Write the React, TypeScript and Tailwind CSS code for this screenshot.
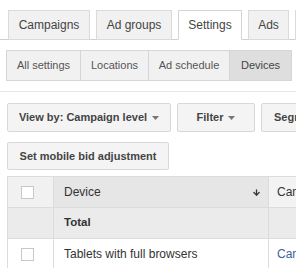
import { ArrowDown } from 'lucide-react';

const tabs = [
  { label: 'Campaigns', w: 'w-[82px]', active: false },
  { label: 'Ad groups', w: 'w-[76px]', active: false },
  { label: 'Settings', w: 'w-[64px]', active: true },
  { label: 'Ads', w: 'w-[41px]', active: false },
  { label: '', w: 'w-[72px]', active: false },
];

const subTabs = [
  { label: 'All settings', w: 'w-[75px]', active: false },
  { label: 'Locations', w: 'w-[69px]', active: false },
  { label: 'Ad schedule', w: 'w-[82px]', active: false },
  { label: 'Devices', w: 'w-[63px]', active: true },
];

function Caret() {
  return (
    <svg width="7" height="4" viewBox="0 0 7 4" className="shrink-0">
      <path d="M0 0h7L3.5 4z" fill="#777" />
    </svg>
  );
}

function Checkbox() {
  return <div className="w-[13px] h-[13px] bg-white border border-[#c8c8c8]" />;
}

export default function App() {
  return (
    <div className="w-[296px] h-[268px] overflow-hidden bg-white font-['Liberation_Sans',Arial,sans-serif] whitespace-nowrap">
      {/* main tabs */}
      <div className="flex gap-[6px] pl-[8px] pt-[10px] border-b border-[#d0d0d0]">
        {tabs.map((t, i) => (
          <div
            key={i}
            className={`${t.w} shrink-0 h-[30px] -mb-px flex items-center justify-center border text-[12px] text-[#444] ${
              t.active ? 'bg-white border-[#d4d4d4] border-b-white' : 'bg-[#f1f1f1] border-[#dadada]'
            }`}
          >
            {t.label}
          </div>
        ))}
      </div>

      {/* sub tabs */}
      <div className="flex ml-[6px] mt-[10px]">
        {subTabs.map((t, i) => (
          <div
            key={t.label}
            className={`${t.w} shrink-0 h-[31px] flex items-center justify-center border border-[#d6d6d6] text-[11px] ${
              i > 0 ? '-ml-px' : ''
            } ${t.active ? 'bg-[#dedede] text-[#444]' : 'bg-[#f1f1f1] text-[#555]'}`}
          >
            {t.label}
          </div>
        ))}
      </div>

      <div className="mt-[10px] h-px bg-[#e6e6e6]" />

      {/* toolbar */}
      <div className="flex gap-[6px] pl-[7px] mt-[11px]">
        <button className="w-[164px] shrink-0 h-[29px] flex items-center justify-center gap-[5px] bg-[#f4f4f4] border border-[#d8d8d8] rounded-[2px] text-[11px] font-bold text-[#444]">
          View by: Campaign level <Caret />
        </button>
        <button className="w-[78px] shrink-0 h-[29px] flex items-center justify-center gap-[5px] bg-[#f4f4f4] border border-[#d8d8d8] rounded-[2px] text-[11px] font-bold text-[#444]">
          Filter <Caret />
        </button>
        <button className="w-[100px] shrink-0 h-[29px] flex items-center pl-[12px] gap-[5px] bg-[#f4f4f4] border border-[#d8d8d8] rounded-[2px] text-[11px] font-bold text-[#444]">
          Segment <Caret />
        </button>
      </div>

      <div className="pl-[7px] mt-[10px]">
        <button className="w-[162px] h-[28px] flex items-center justify-center bg-[#f4f4f4] border border-[#d8d8d8] rounded-[2px] text-[11px] font-bold text-[#444]">
          Set mobile bid adjustment
        </button>
      </div>

      {/* table */}
      <div className="ml-[7px] mt-[6px] border-l border-t border-[#dcdcdc] text-[12px] text-[#333]">
        <div className="flex h-[31px] border-b border-[#dcdcdc]">
          <div className="w-[46px] shrink-0 pl-[13px] flex items-center bg-[#f1f1f1] border-r border-[#dcdcdc]">
            <Checkbox />
          </div>
          <div className="w-[215px] shrink-0 pl-[10px] pr-[7px] flex items-center justify-between bg-[#e6e6e6] border-r border-[#dcdcdc]">
            <span>Device</span>
            <ArrowDown size={9} strokeWidth={3.5} color="#333" />
          </div>
          <div className="w-[120px] shrink-0 pl-[8px] flex items-center bg-[#f3f3f3]">Campaign</div>
        </div>

        <div className="flex h-[31px] border-b border-[#dcdcdc] bg-[#ebebeb]">
          <div className="w-[46px] shrink-0 border-r border-[#dcdcdc]" />
          <div className="w-[215px] shrink-0 pl-[10px] flex items-center border-r border-[#dcdcdc] font-bold text-[11.5px]">
            Total
          </div>
          <div className="w-[120px] shrink-0" />
        </div>

        <div className="flex h-[31px] border-b border-[#dcdcdc] bg-white">
          <div className="w-[46px] shrink-0 pl-[13px] flex items-center border-r border-[#dcdcdc]">
            <Checkbox />
          </div>
          <div className="w-[215px] shrink-0 pl-[10px] flex items-center border-r border-[#dcdcdc]">
            Tablets with full browsers
          </div>
          <div className="w-[120px] shrink-0 pl-[8px] flex items-center text-[#42609e]">Campaign #1</div>
        </div>
      </div>
    </div>
  );
}
